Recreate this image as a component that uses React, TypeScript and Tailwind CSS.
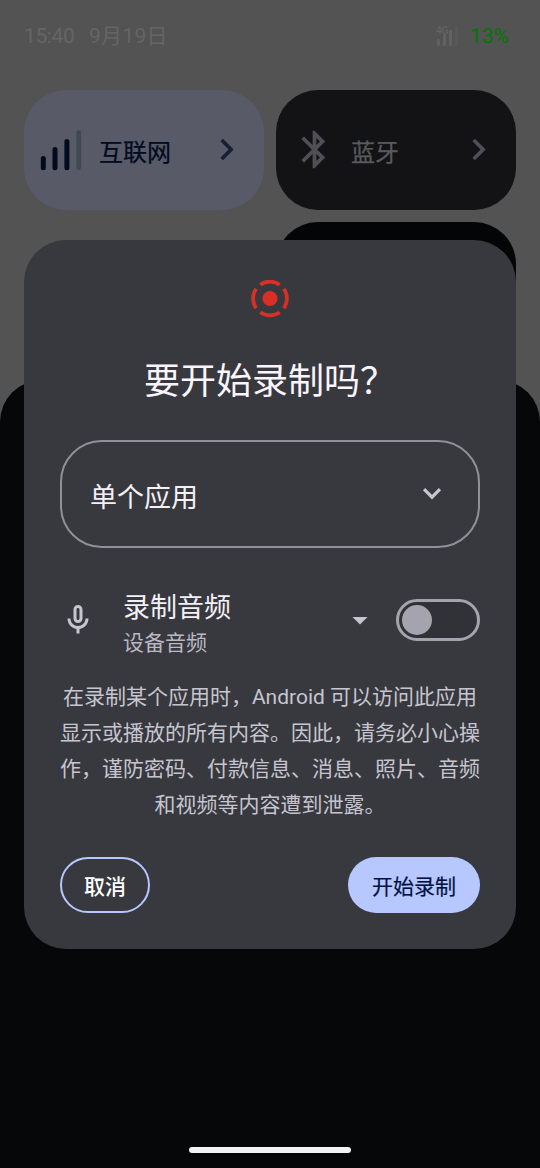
import type { ReactNode } from "react";
import clsx from "clsx";

type TileProps = {
  icon: ReactNode;
  label: string;
  active?: boolean;
};

function SignalIcon() {
  return (
    <svg className="mt-0.5" width="42" height="42" viewBox="0 0 42 42" fill="none" strokeLinecap="round">
      <g stroke="#010a1e" strokeWidth="5">
        <path d="M3.3 28.6v9.2" />
        <path d="M15 19.5v18.3" />
        <path d="M26.9 11.6v26.2" />
      </g>
      <path d="M38.7 2.6v35" stroke="#414954" strokeWidth="4.8" />
    </svg>
  );
}

function BluetoothIcon() {
  return (
    <svg className="mb-0.5" width="45" height="45" viewBox="0 0 24 24" fill="#504f55">
      <path d="M17.71 7.71L12 2h-1v7.59L6.41 5 5 6.41 10.59 12 5 17.59 6.41 19 11 14.41V22h1l5.71-5.71-4.3-4.29 4.3-4.29zM13 5.83l1.88 1.88L13 9.59V5.83zm1.88 10.46L13 18.17v-3.76l1.88 1.88z" />
    </svg>
  );
}

function RecordIcon() {
  return (
    <svg width="39" height="38" viewBox="0 0 39 38" fill="none">
      <circle cx="19" cy="18.5" r="7.6" fill="#d93025" />
      <circle
        cx="19"
        cy="18.5"
        r="16.9"
        stroke="#d93025"
        strokeWidth="3.7"
        pathLength="360"
        strokeDasharray="70 20"
        transform="rotate(-125 19 18.5)"
      />
    </svg>
  );
}

function MicIcon() {
  return (
    <svg width="36" height="36" viewBox="0 0 24 24" fill="#c6c5d0">
      <path d="M12 14c1.66 0 3-1.34 3-3V5c0-1.66-1.34-3-3-3S9 3.34 9 5v6c0 1.66 1.34 3 3 3zm-1-9c0-.55.45-1 1-1s1 .45 1 1v6c0 .55-.45 1-1 1s-1-.45-1-1V5zm6 6c0 2.76-2.24 5-5 5s-5-2.24-5-5H5c0 3.53 2.61 6.43 6 6.92V21h2v-3.08c3.39-.49 6-3.39 6-6.92h-2z" />
    </svg>
  );
}

function Tile({ icon, label, active }: TileProps) {
  return (
    <div
      className={clsx(
        "flex h-[120px] items-center rounded-[42px] pl-4",
        active ? "bg-[#585a67]" : "bg-[#131315]"
      )}
    >
      {icon}
      <span
        className={clsx(
          "mt-1.5 text-2xl [-webkit-text-stroke:0.25px]",
          active ? "ml-[17px] text-[#010a1e]" : "ml-[14px] text-[#5a5a5d]"
        )}
      >
        {label}
      </span>
      <svg
        className="mr-4 mb-px ml-auto"
        width="43"
        height="43"
        viewBox="0 0 24 24"
        fill={active ? "#162035" : "#504f55"}
      >
        <path d="M10 6L8.59 7.41 13.17 12l-4.58 4.59L10 18l6-6z" />
      </svg>
    </div>
  );
}

function StatusBar() {
  return (
    <div className="flex h-[72px] items-center pt-0.5 pr-[31px] pl-6 text-[21px] text-[#656565]">
      <span className="w-[65px] tracking-[-0.4px]">15:40</span>
      <span className="tracking-[0.3px]">9月19日</span>
      <div className="relative mb-0.5 ml-auto h-5 w-[23px]">
        <svg className="absolute inset-0" width="23" height="20" viewBox="0 0 23 20" fill="#616161">
          <rect x="1" y="13" width="3" height="7" rx="1.2" />
          <rect x="7" y="8" width="3" height="12" rx="1.2" />
          <rect x="13" y="4" width="3" height="16" rx="1.2" />
          <rect x="19" y="0" width="3" height="20" rx="1.2" fill="#585858" />
        </svg>
        <span className="absolute top-0 left-0 text-[10px] leading-[10px] text-[#666666]">4G</span>
      </div>
      <span className="ml-[11px] text-[#067306]">13%</span>
    </div>
  );
}

function AudioRow() {
  return (
    <div className="mt-10 flex h-16 items-center">
      <MicIcon />
      <div className="mt-2.5 ml-[27px]">
        <div className="text-[27px] leading-9 text-[#f3f0f7]">录制音频</div>
        <div className="text-[21px] leading-[34px] text-[#b9b8c3]">设备音频</div>
      </div>
      <svg className="ml-auto" width="36" height="36" viewBox="0 0 24 24" fill="#c6c5d0">
        <path d="M7 10l5 5 5-5z" />
      </svg>
      <div className="ml-[18px] flex h-[42px] w-[84px] items-center rounded-full border-[3px] border-[#a5a4ae] bg-[#313237] pl-[3px]">
        <div className="size-[30px] rounded-full bg-[#a5a4ae]" />
      </div>
    </div>
  );
}

function RecordDialog() {
  return (
    <div className="absolute top-[240px] left-6 flex h-[709px] w-[492px] flex-col rounded-[42px] bg-[#38393e] px-9 pt-10">
      <div className="flex justify-center">
        <RecordIcon />
      </div>
      <h1 className="mt-[37px] text-center text-4xl leading-[54px] text-[#faf5fc]">要开始录制吗？</h1>

      <div className="mt-[31px] flex h-[108px] items-center rounded-[42px] border-2 border-[#8f909a] pr-9 pl-7">
        <span className="mt-2 text-[27px] text-[#f3f0f7]">单个应用</span>
        <svg className="ml-auto" width="20" height="14" viewBox="0 0 20 14" fill="none">
          <path d="M2 2.2l8 8 8-8" stroke="#c6c5d0" strokeWidth="3.2" />
        </svg>
      </div>

      <AudioRow />

      <p className="mt-[27px] text-center text-[21px] leading-9 text-[#c6c5d0]">
        在录制某个应用时，Android 可以访问此应用
        <br />
        显示或播放的所有内容。因此，请务必小心操
        <br />
        作，谨防密码、付款信息、消息、照片、音频
        <br />
        和视频等内容遭到泄露。
      </p>

      <div className="mt-[34px] flex justify-between text-[21px]">
        <button className="h-14 w-[90px] rounded-full border-2 border-[#b7c7ff] pt-1.5 font-medium text-white">
          取消
        </button>
        <button className="h-14 w-[132px] rounded-full bg-[#b7c7ff] pt-1.5 text-[#00133f] [-webkit-text-stroke:0.2px]">
          开始录制
        </button>
      </div>
    </div>
  );
}

export default function App() {
  return (
    <div className="relative flex h-[1168px] w-[540px] flex-col overflow-hidden bg-[#535353] font-[Roboto,'Noto_Sans_CJK_SC',sans-serif]">
      {/* Quick settings behind the dialog */}
      <StatusBar />
      <div className="mt-[18px] grid grid-cols-2 gap-3 px-6">
        <Tile icon={<SignalIcon />} label="互联网" active />
        <Tile icon={<BluetoothIcon />} label="蓝牙" />
        <div className="col-start-2 h-[120px] rounded-[42px] bg-[#030506]" />
      </div>
      <div className="mt-[38px] flex flex-1 items-end justify-center rounded-t-[42px] bg-[#050709] pb-[15px]">
        <div className="h-1.5 w-[162px] rounded-full bg-[#f3f3f3]" />
      </div>

      <RecordDialog />
    </div>
  );
}
